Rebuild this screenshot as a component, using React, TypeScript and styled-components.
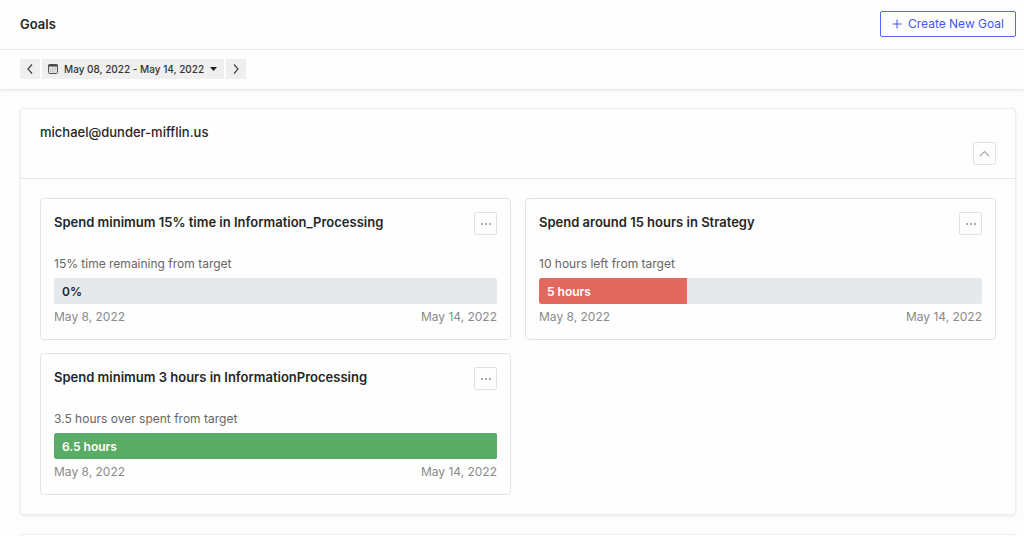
import React, { useState } from "react";
import styled, { createGlobalStyle } from "styled-components";

const GlobalStyle = createGlobalStyle`
  *, *::before, *::after { box-sizing: border-box; }
  body {
    margin: 0;
    background: #fdfdfd;
    color: #262626;
    font-family: Inter, "Liberation Sans", sans-serif;
    font-size: 12px;
    line-height: 16px;
  }
  button { font: inherit; color: inherit; padding: 0; cursor: pointer; }
  h1, h2, h3, p { margin: 0; }
`;

const Shell = styled.div`
  display: flex;
  flex-direction: column;
  height: 100vh;
`;

const Header = styled.header`
  display: flex;
  align-items: center;
  justify-content: space-between;
  flex: none;
  height: 50px;
  padding: 0 8px 2px 20px;
  border-bottom: 1px solid #ececec;
  background: #fefefe;
`;

const PageTitle = styled.h1`
  font-size: 13px;
  line-height: 16px;
  font-weight: 600;
`;

const CreateButton = styled.button`
  display: flex;
  align-items: center;
  gap: 6px;
  height: 26px;
  padding: 0 11px;
  border: 1px solid #5468f5;
  border-radius: 2px;
  background: #fefefe;
  color: #4257f2;
  font-weight: 400;
`;

const Toolbar = styled.nav`
  display: flex;
  align-items: center;
  gap: 2px;
  flex: none;
  height: 39px;
  padding: 0 20px 1px;
  background: #fefefe;
  box-shadow: 0 1px 3px rgba(0, 0, 0, 0.12);
`;

const ToolButton = styled.button<{ $wide?: boolean }>`
  display: flex;
  align-items: center;
  justify-content: center;
  gap: 6px;
  height: 20px;
  min-width: 20px;
  padding: ${(p) => (p.$wide ? "0 7px 0 6px" : "0")};
  border: 0;
  background: #efefef;
  color: #333;
  font-size: 10px;
  font-weight: 500;
`;

const Main = styled.main`
  display: flex;
  flex-direction: column;
  gap: 19px;
  flex: 1;
  min-height: 0;
  padding: 19px 8px 0 20px;
  overflow-y: auto;
  scrollbar-width: none;
`;

const Panel = styled.section`
  flex: none;
  border: 1px solid #eeeeee;
  border-radius: 4px;
  background: #fefefe;
  box-shadow: 0 1px 3px rgba(0, 0, 0, 0.08);
`;

const PanelHeader = styled.div`
  display: flex;
  flex-direction: column;
  justify-content: space-between;
  height: 70px;
  padding: 15px 19px 13px;
  border-bottom: 1px solid #e6e6e6;
`;

const Owner = styled.h2`
  font-size: 13px;
  line-height: 16px;
  font-weight: 500;
`;

const SquareButton = styled.button`
  display: flex;
  align-items: center;
  justify-content: center;
  flex: none;
  align-self: flex-end;
  width: 23px;
  height: 23px;
  border: 1px solid #e2e2e2;
  border-radius: 2px;
  background: #fefefe;
`;

const Cards = styled.div`
  display: grid;
  grid-template-columns: 1fr 1fr;
  gap: 13px 14px;
  padding: 19px;
`;

const Card = styled.article`
  padding: 13px 13px 14px;
  border: 1px solid #e4e4e6;
  border-radius: 4px;
`;

const CardTop = styled.div`
  display: flex;
  justify-content: space-between;
`;

const CardTitle = styled.h3`
  padding-top: 2px;
  font-size: 13px;
  line-height: 16px;
  font-weight: 600;
`;

const Status = styled.p`
  margin-top: 21px;
  color: #666;
`;

const Track = styled.div`
  height: 26px;
  margin-top: 6px;
  border-radius: 2px;
  background: #e5e9ec;
  overflow: hidden;
`;

const Fill = styled.div<{ $color: string; $light: boolean }>`
  height: 100%;
  padding: 1px 0 0 8px;
  border-radius: 2px 0 0 2px;
  background: ${(p) => p.$color};
  color: ${(p) => (p.$light ? "#fff" : "#262626")};
  line-height: 26px;
  font-weight: 600;
  white-space: nowrap;
`;

const Dates = styled.div`
  display: flex;
  justify-content: space-between;
  margin-top: 5px;
  color: #8a8a8a;
`;

type Goal = { title: string; status: string; value: string; percent: number; color: string };

const goals: Goal[] = [
  { title: "Spend minimum 15% time in Information_Processing", status: "15% time remaining from target", value: "0%", percent: 0, color: "transparent" },
  { title: "Spend around 15 hours in Strategy", status: "10 hours left from target", value: "5 hours", percent: 100 / 3, color: "#e26860" },
  { title: "Spend minimum 3 hours in InformationProcessing", status: "3.5 hours over spent from target", value: "6.5 hours", percent: 100, color: "#59ac66" },
];

const Chevron = ({ points, color = "#444", width = 8, height = 12 }: { points: string; color?: string; width?: number; height?: number }) => (
  <svg width={width} height={height} viewBox={`0 0 ${width} ${height}`} fill="none" stroke={color} strokeWidth="1.2" aria-hidden="true">
    <polyline points={points} />
  </svg>
);

const PlusIcon = () => (
  <svg width="10" height="10" viewBox="0 0 10 10" stroke="currentColor" strokeWidth="1" aria-hidden="true">
    <path d="M5 .5v9M.5 5h9" />
  </svg>
);

const CalendarIcon = () => (
  <svg width="10" height="10" viewBox="0 0 10 10" fill="none" aria-hidden="true">
    <rect x=".5" y=".5" width="9" height="9" rx="1" fill="#dcdcdc" stroke="#555" />
    <path d="M.5 1.5h9" stroke="#444" strokeWidth="2" />
    <path d="M4.500 5h1M7 5h1M2 7.200h1M4.500 7.200h1" stroke="#aaa" />
  </svg>
);

const CaretIcon = () => (
  <svg width="7" height="4" viewBox="0 0 7 4" aria-hidden="true">
    <path d="M0 0h7L3.500 4z" fill="#1c1c1c" />
  </svg>
);

const DotsIcon = () => (
  <svg width="10" height="2" viewBox="0 0 10 2" fill="#444" aria-hidden="true">
    <circle cx="1" cy="1" r=".8" />
    <circle cx="5" cy="1" r=".8" />
    <circle cx="9" cy="1" r=".8" />
  </svg>
);

const GoalCard = ({ goal }: { goal: Goal }) => (
  <Card>
    <CardTop>
      <CardTitle>{goal.title}</CardTitle>
      <SquareButton aria-label="Goal options"><DotsIcon /></SquareButton>
    </CardTop>
    <Status>{goal.status}</Status>
    <Track>
      <Fill $color={goal.color} $light={goal.percent > 0} style={{ width: `${goal.percent}%` }}>{goal.value}</Fill>
    </Track>
    <Dates>
      <span>May 8, 2022</span>
      <span>May 14, 2022</span>
    </Dates>
  </Card>
);

export default function App() {
  const [open, setOpen] = useState(true);
  return (
    <>
      <GlobalStyle />
      <Shell>
        <Header>
          <PageTitle>Goals</PageTitle>
          <CreateButton><PlusIcon />Create New Goal</CreateButton>
        </Header>
        <Toolbar aria-label="Date range">
          <ToolButton aria-label="Previous week"><Chevron points="6,1.500 2,6 6,10.500" /></ToolButton>
          <ToolButton $wide><CalendarIcon />May 08, 2022 - May 14, 2022<CaretIcon /></ToolButton>
          <ToolButton aria-label="Next week"><Chevron points="2,1.500 6,6 2,10.500" /></ToolButton>
        </Toolbar>
        <Main>
          <Panel>
            <PanelHeader>
              <Owner>michael@dunder-mifflin.us</Owner>
              <SquareButton aria-label="Toggle goals" aria-expanded={open} onClick={() => setOpen(!open)}>
                <Chevron points="1,6 5.500,1.500 10,6" color="#aaa" width={11} height={7} />
              </SquareButton>
            </PanelHeader>
            {open && <Cards>{goals.map((goal) => <GoalCard key={goal.title} goal={goal} />)}</Cards>}
          </Panel>
          <Panel>
            <PanelHeader />
          </Panel>
        </Main>
      </Shell>
    </>
  );
}
